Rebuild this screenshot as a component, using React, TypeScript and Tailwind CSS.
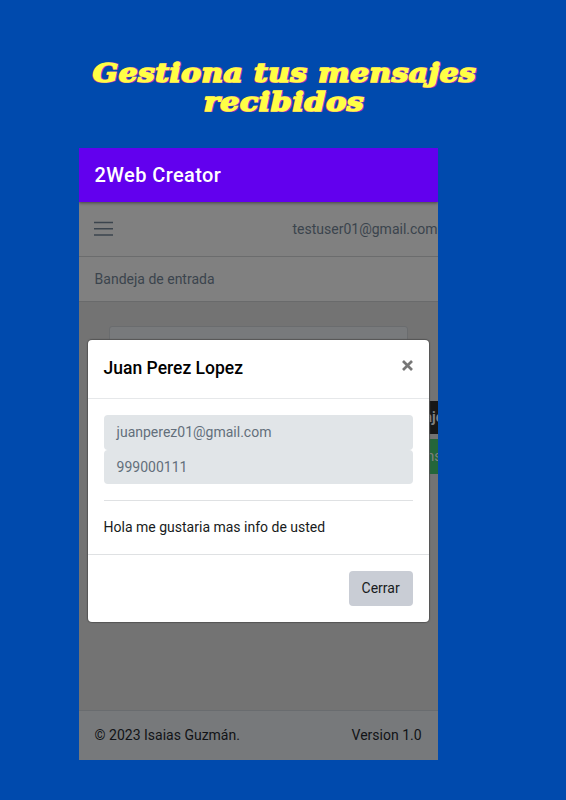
import React from "react";

function Heading() {
  return (
    <h1 className="flex h-[148px] flex-col items-center pt-[58.6px] pl-[3px] font-['DejaVu_Serif','Liberation_Serif',serif] text-[25.5px] leading-[29.5px] font-bold italic text-[#ffff45] [-webkit-text-stroke:1.5px_#ffff45] [text-shadow:-1.3px_1.3px_0_#b52bb0,1.3px_1.3px_0_#b52bb0,1.3px_-1px_0_#8f3cb4,-1.3px_-0.5px_0_#b52bb0]">
      <span className="scale-x-[1.165] whitespace-nowrap tracking-[0.4px]">Gestiona tus mensajes</span>
      <span className="scale-x-[1.18] whitespace-nowrap tracking-[0.5px]">recibidos</span>
    </h1>
  );
}

function MessageDialog() {
  return (
    <section className="absolute top-[192px] left-[9px] flex h-[281.5px] w-[341px] flex-col rounded-[4px] bg-white text-[#181b20] shadow-[0_0_1px_1px_#555]">
      <header className="flex h-[59px] shrink-0 justify-between border-b border-[#e6e8ea] px-4">
        <h2 className="pt-[16px] text-[17.5px] leading-6 font-medium text-black">Juan Perez Lopez</h2>
        <button aria-label="Cerrar mensaje" className="h-[51px]">
          <svg width="11" height="11" viewBox="0 0 11 11" fill="none" stroke="#777" strokeWidth="2.7">
            <path d="M1 1L10 10M10 1L1 10" />
          </svg>
        </button>
      </header>
      <div className="flex h-[156px] shrink-0 flex-col border-b border-[#dfe1e3] px-4 pt-4">
        <div className="flex h-[34.5px] items-center rounded-[4px] bg-[#e1e5e8] px-[13px] text-[#636f7b]">juanperez01@gmail.com</div>
        <div className="flex h-[34.5px] items-center rounded-[4px] bg-[#e1e5e8] px-[13px] pt-[1px] text-[#636f7b]">999000111</div>
        <hr className="mt-4 border-[#dfe1e3]" />
        <p className="mt-[16px] leading-5">Hola me gustaria mas info de usted</p>
      </div>
      <footer className="flex justify-end px-4 pt-4">
        <button className="h-[34.5px] w-[64px] rounded-[4px] bg-[#c9cdd5]">Cerrar</button>
      </footer>
    </section>
  );
}

export default function App() {
  return (
    <main className="h-[800px] w-[566px] overflow-hidden bg-[#004aad] font-['Roboto',sans-serif] text-[14px]">
      <Heading />
      <div className="relative ml-[78.6px] flex h-[611.5px] w-[359px] flex-col overflow-hidden bg-[#737373]">
        <header className="z-10 flex h-[54px] shrink-0 items-center bg-[#6200ee] px-4 text-[20px] font-medium tracking-[0.4px] text-white shadow-[0_1px_3px_#444]">
          2Web Creator
        </header>
        <nav className="flex h-[55px] shrink-0 items-center justify-between border-b border-[#6b6c6d] bg-[#808080] pl-[15.4px] text-[#3b444d]">
          <svg width="19" height="16" viewBox="0 0 19 16" stroke="#3b444d" strokeWidth="1.5">
            <path d="M0 1.5H19M0 7.7H19M0 14H19" />
          </svg>
          <span>testuser01@gmail.com</span>
        </nav>
        <div className="flex h-[45px] shrink-0 items-center border-b border-[#696a6b] bg-[#808080] px-4 text-[#3b444d]">Bandeja de entrada</div>
        <div className="flex h-[408px] shrink-0 flex-col pt-[24px]">
          <div className="mx-[30px] h-[75px] shrink-0 rounded-[3px] border border-[#6a6c6e] bg-[#787a7c]" />
          <div className="ml-[330px] h-[33px] shrink-0 bg-[#171717] pl-[16px] leading-[33px] font-bold whitespace-nowrap text-[#808080]">aje</div>
          <div className="mt-[5px] ml-[330px] h-[35px] shrink-0 bg-[#24663a] pl-[18px] leading-[35px] whitespace-nowrap text-[#808080]">ns</div>
        </div>
        <footer className="flex grow items-center justify-between border-t border-[#696c6f] bg-[#77797b] px-4 text-[#111316]">
          <span>© 2023 Isaias Guzmán.</span>
          <span>Version 1.0</span>
        </footer>
        <MessageDialog />
      </div>
    </main>
  );
}
